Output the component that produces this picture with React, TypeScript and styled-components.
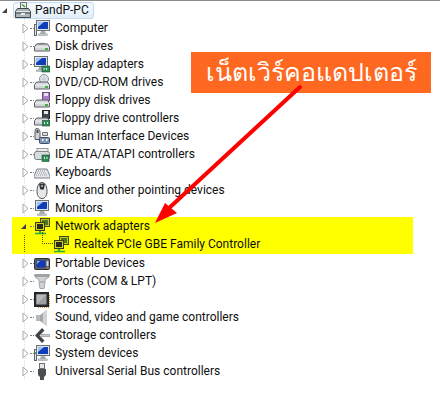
import React from "react";
import styled, { createGlobalStyle } from "styled-components";

const GlobalStyle = createGlobalStyle`
  html, body {
    margin: 0;
    padding: 0;
    background: #fff;
  }
`;

type IconKind =
  | "root" | "computer" | "disk" | "display" | "dvd" | "floppy" | "floppyCtl" | "hid" | "ide"
  | "keyboard" | "mouse" | "monitor" | "network" | "portable" | "ports" | "cpu" | "sound"
  | "storage" | "system" | "usb";

function DriveBase({ y = 9 }: { y?: number }) {
  return (
    <>
      <path d={`M0.5 ${y + 2}l2-3h11l2 3v4h-15z`} fill="#d2d6d7" stroke="#596165" />
      <path d={`M1 ${y + 2}h14`} stroke="#f4f5f5" />
      <rect x="11" y={y + 3} width="3" height="2" fill="#3fb03f" />
    </>
  );
}

function MiniMonitor({ x = 2 }: { x?: number }) {
  return (
    <g transform={`translate(${x} 0)`}>
      <rect x="0.5" y="0.5" width="13" height="10" fill="#dfe5e9" stroke="#6a7276" />
      <rect x="2" y="2" width="10" height="7" fill="#0f3fb8" />
      <path d="M2 2h6l-6 5z" fill="#9fc2f2" />
      <path d="M5 11h4l1 3H4z" fill="#a8aeb2" />
      <rect x="2.5" y="14" width="9" height="1.5" fill="#d4d8da" stroke="#858b8f" strokeWidth="0.5" />
    </g>
  );
}

function TreeIcon({ kind }: { kind: IconKind }) {
  return (
    <IconSvg viewBox="0 0 16 17">
      {kind === "root" && (
        <>
          <path d="M5.5 0.5h6v6h-6z" fill="#eef0ea" stroke="#6c7478" />
          <path d="M7 2.5l3 2.5" stroke="#3aa040" strokeWidth="1.6" />
          <path d="M0.5 9.5l2-3h11l2 3v6h-15z" fill="#aeb5b9" stroke="#3f464a" />
          <path d="M1 11h14" stroke="#3f464a" />
          <path d="M1 9.5h14" stroke="#e8eaeb" />
          <rect x="6" y="11" width="4" height="2" fill="#e8eaeb" />
        </>
      )}
      {kind === "computer" && (
        <>
          <rect x="0.5" y="4.5" width="2" height="11" fill="#e0e3e4" stroke="#5f6569" />
          <MiniMonitor />
        </>
      )}
      {kind === "disk" && (
        <>
          <path d="M1 9c1-5 13-5 14 0" fill="#e2e5e6" stroke="#8a9094" />
          <DriveBase y={7} />
        </>
      )}
      {kind === "display" && (
        <>
          <MiniMonitor x={0} />
          <rect x="8" y="10" width="8" height="6" fill="#2e8a56" stroke="#1a4f33" strokeWidth="0.6" />
          <path d="M9.5 12h1v2h-1zM12 12h1v2h-1z" fill="#d6f0d8" />
        </>
      )}
      {kind === "dvd" && (
        <>
          <circle cx="10" cy="5" r="4.5" fill="#dfe4ea" stroke="#8b9298" />
          <circle cx="10" cy="5" r="1.2" fill="#fff" stroke="#888" strokeWidth="0.5" />
          <DriveBase />
        </>
      )}
      {kind === "floppy" && (
        <>
          <rect x="8.5" y="0.5" width="7" height="8" fill="#a77cc9" stroke="#684a86" />
          <rect x="10" y="1" width="4" height="3" fill="#e9dff0" />
          <DriveBase />
        </>
      )}
      {kind === "floppyCtl" && (
        <>
          <rect x="8.5" y="0.5" width="7" height="8" fill="#40464c" stroke="#25292d" />
          <rect x="10" y="1" width="4" height="3" fill="#e4e6e8" />
          <DriveBase />
          <rect x="8.5" y="10.5" width="7.5" height="5.5" fill="#2e8a56" stroke="#1a4f33" strokeWidth="0.6" />
          <path d="M10 12h1v2h-1zM13 12h1v2h-1z" fill="#d6f0d8" />
        </>
      )}
      {kind === "hid" && (
        <>
          <path d="M2 0.5c3 0 4 1 4 4v7H1V3z" fill="#cfd3d6" stroke="#555b60" />
          <rect x="2.5" y="2" width="2" height="3" fill="#45494d" />
          <path d="M8.5 4.5h5v3h-5z" fill="#dde0e2" stroke="#6a7075" />
          <rect x="5.5" y="9.5" width="10" height="6" rx="1" fill="#7f97b4" stroke="#3f4f66" />
          <path d="M8 11h1.5v2H8zM12 11h1.5v2H12z" fill="#eef2f7" />
        </>
      )}
      {kind === "ide" && (
        <>
          <rect x="0.5" y="5.5" width="15" height="8" rx="2" fill="#d9dcdd" stroke="#777e82" />
          <rect x="3" y="2.5" width="11" height="3" fill="#eceeef" stroke="#6f7478" strokeWidth="0.7" />
          <rect x="8" y="9" width="7" height="6.5" fill="#2e8a56" stroke="#1a4f33" strokeWidth="0.6" />
          <path d="M10 11h1v2h-1zM12.5 11h1v2h-1z" fill="#d6f0d8" />
        </>
      )}
      {kind === "keyboard" && (
        <>
          <path d="M3 5h10l3 7v2H0v-2z" fill="#e4e6ea" stroke="#7b8188" />
          <path d="M4 7h8M3 9h10M2 11h12" stroke="#8e94a0" strokeDasharray="1 1" />
        </>
      )}
      {kind === "mouse" && (
        <>
          <path d="M8 0.5c4 0 5 5 5 9 0 4-2 7-5 7s-5-3-5-7c0-4 1-9 5-9z" fill="#e6e7e8" stroke="#4f5357" />
          <path d="M5 1.5h6l-1 5.5c-1 1-3 1-4 0z" fill="#34373a" />
          <circle cx="8" cy="4" r="1" fill="#b9bcbf" />
        </>
      )}
      {kind === "monitor" && <MiniMonitor x={1} />}
      {kind === "network" && (
        <>
          <rect x="6.5" y="0.5" width="9" height="8" fill="#c2cc1c" stroke="#4a4a20" />
          <rect x="8" y="2" width="6" height="5" fill="#4e7a1a" />
          <rect x="1.5" y="4.5" width="9" height="8" fill="#d0d41a" stroke="#3e3e1c" />
          <rect x="3" y="6" width="6" height="5" fill="#2b2f1a" />
          <path d="M6 13v2" stroke="#2fae3c" strokeWidth="2" />
          <path d="M1 15.5h11" stroke="#2fae3c" strokeWidth="1.6" />
        </>
      )}
      {kind === "portable" && (
        <>
          <rect x="0.5" y="3.5" width="15" height="11" rx="1" fill="#5a5f65" stroke="#2c2f33" />
          <rect x="2.5" y="5.5" width="9" height="7" fill="#1538b4" />
          <path d="M3 6h3l-3 3z" fill="#8fb0ee" />
          <path d="M12.5 6h2v5h-2z" fill="#d4d7da" />
          <rect x="13" y="12" width="1.5" height="1.5" fill="#d98f3a" />
        </>
      )}
      {kind === "ports" && (
        <>
          <path d="M0.5 1.5h15l-1 3-3.5 2v3l-1 6H6l-1-6v-3l-3.5-2z" fill="#cfd4d8" stroke="#9ea4a9" />
          <path d="M1 3h14" stroke="#7c8286" strokeWidth="1.2" />
          <path d="M6 9h4" stroke="#8f9599" />
        </>
      )}
      {kind === "cpu" && (
        <>
          <rect x="0.5" y="1.5" width="14" height="14" fill="#2a2d30" stroke="#1f2224" />
          <rect x="2.5" y="3.5" width="10" height="10" fill="#9ca1a4" />
          <path d="M2.5 3.5h10l-10 10z" fill="#b6babd" />
          <path d="M15.5 4v12M4 16.5h12" stroke="#d49a3a" strokeDasharray="1 1" />
        </>
      )}
      {kind === "sound" && (
        <>
          <rect x="2" y="6" width="5" height="6" fill="#b4babd" />
          <path d="M6 6l7-5v16l-7-5z" fill="#a2a9ad" />
          <path d="M9 4l4-3v16l-4-3z" fill="#d0d4d7" />
        </>
      )}
      {kind === "storage" && (
        <>
          <path d="M8 1L1 8.5 8 16l2.5-2.5-5-5 5-5z" fill="#3f4347" />
          <path d="M7 7.5h9v2H7z" fill="#c4c8cb" stroke="#777d82" strokeWidth="0.5" />
        </>
      )}
      {kind === "system" && (
        <>
          <rect x="0.5" y="4.5" width="2" height="11" fill="#e0e3e4" stroke="#5f6569" />
          <rect x="1" y="7" width="1" height="2" fill="#3fb03f" />
          <MiniMonitor />
        </>
      )}
      {kind === "usb" && (
        <>
          <rect x="5.5" y="0.5" width="5" height="5" fill="#e7e8e9" stroke="#6c7074" />
          <path d="M4 6h8v6l-2 2v3H6v-3l-2-2z" fill="#4a4f54" />
        </>
      )}
    </IconSvg>
  );
}

type Device = { label: string; icon: IconKind };

const beforeNetwork: Device[] = [
  { label: "Computer", icon: "computer" },
  { label: "Disk drives", icon: "disk" },
  { label: "Display adapters", icon: "display" },
  { label: "DVD/CD-ROM drives", icon: "dvd" },
  { label: "Floppy disk drives", icon: "floppy" },
  { label: "Floppy drive controllers", icon: "floppyCtl" },
  { label: "Human Interface Devices", icon: "hid" },
  { label: "IDE ATA/ATAPI controllers", icon: "ide" },
  { label: "Keyboards", icon: "keyboard" },
  { label: "Mice and other pointing devices", icon: "mouse" },
  { label: "Monitors", icon: "monitor" },
];

const afterNetwork: Device[] = [
  { label: "Portable Devices", icon: "portable" },
  { label: "Ports (COM & LPT)", icon: "ports" },
  { label: "Processors", icon: "cpu" },
  { label: "Sound, video and game controllers", icon: "sound" },
  { label: "Storage controllers", icon: "storage" },
  { label: "System devices", icon: "system" },
  { label: "Universal Serial Bus controllers", icon: "usb" },
];

function Row({ label, icon }: Device) {
  return (
    <TreeRow>
      <CollapsedArrow viewBox="0 0 7 11">
        <path d="M1 1l5 4.5L1 10z" fill="#fff" stroke="#a6a6a6" />
      </CollapsedArrow>
      <Dots />
      <TreeIcon kind={icon} />
      <Label>{label}</Label>
    </TreeRow>
  );
}

export default function App() {
  return (
    <Page>
      <GlobalStyle />
      <RootRow>
        <ExpandedArrow viewBox="0 0 7 7">
          <path d="M6 1v5H1z" fill="#404040" />
        </ExpandedArrow>
        <RootChip>
          <TreeIcon kind="root" />
          <RootLabel>PandP-PC</RootLabel>
        </RootChip>
      </RootRow>

      {beforeNetwork.map((d) => (
        <Row key={d.label} {...d} />
      ))}

      <Highlight>
        <GroupRow>
          <ExpandedArrow viewBox="0 0 7 7">
            <path d="M6 1v5H1z" fill="#404040" />
          </ExpandedArrow>
          <Dots />
          <TreeIcon kind="network" />
          <Label>Network adapters</Label>
        </GroupRow>
        <ChildRow>
          <Elbow />
          <TreeIcon kind="network" />
          <Label>Realtek PCIe GBE Family Controller</Label>
        </ChildRow>
      </Highlight>

      {afterNetwork.map((d) => (
        <Row key={d.label} {...d} />
      ))}

      <Callout>เน็ตเวิร์คอแดปเตอร์</Callout>
      <ArrowOverlay viewBox="0 0 440 417">
        <path d="M300 87L168 209" stroke="#fe0000" strokeWidth="4" strokeLinecap="round" />
        <path d="M155 223l10-20 12 10z" fill="#fe0000" />
      </ArrowOverlay>
    </Page>
  );
}

const Page = styled.div`
  position: relative;
  width: 440px;
  height: 417px;
  overflow: hidden;
  box-sizing: border-box;
  border-top: 1px solid #8c8c8c;
  background: #fff;
  color: #101010;
  font-family: Roboto, "Noto Sans", sans-serif;
  font-size: 12px;
`;

const TreeRow = styled.div`
  background-image: repeating-linear-gradient(#dcdcdc 0 1px, transparent 1px 2px);
  background-size: 1px 100%;
  background-repeat: no-repeat;
  background-position: 24px 0;
  display: flex;
  align-items: center;
  height: 18px;
  padding-left: 22px;
`;

const RootRow = styled.div`
  display: flex;
  align-items: center;
  height: 18px;
  padding-left: 1px;
`;

const RootChip = styled.div`
  display: flex;
  align-items: center;
  gap: 4px;
  width: 81px;
  height: 17px;
  margin: 1px 0 0 3px;
  padding-left: 1px;
  box-sizing: border-box;
  border: 1px solid #c4dcf2;
  border-radius: 3px;
  background: linear-gradient(#f6fafe, #e2eef9);
`;

const RootLabel = styled.span`
  line-height: 15px;
  white-space: nowrap;
`;

const CollapsedArrow = styled.svg`
  width: 7px;
  height: 11px;
  flex: none;
`;

const ExpandedArrow = styled.svg`
  width: 7px;
  height: 7px;
  margin-right: 2px;
  flex: none;
`;

const Dots = styled.span`
  width: 4px;
  margin-left: 1px;
  flex: none;
  border-top: 1px dotted #808080;
`;

const IconSvg = styled.svg`
  width: 16px;
  height: 17px;
  flex: none;
`;

const Label = styled.span`
  margin-left: 5px;
  white-space: nowrap;
  line-height: 18px;
`;

const Highlight = styled.div`
  width: 401px;
  height: 37px;
  margin-left: 12px;
  background: #ffff00;
`;

const GroupRow = styled.div`
  display: flex;
  align-items: center;
  height: 18px;
  padding-left: 8px;
`;

const ChildRow = styled.div`
  background-image: repeating-linear-gradient(#55551a 0 1px, transparent 1px 2px);
  background-size: 1px 100%;
  background-repeat: no-repeat;
  background-position: 12px 0;
  display: flex;
  align-items: center;
  height: 18px;
  padding-left: 30px;
`;

const Elbow = styled.span`
  width: 11px;
  height: 12px;
  margin-top: -12px;
  flex: none;
  box-sizing: border-box;
  border-left: 1px dotted #55551a;
  border-bottom: 1px dotted #55551a;
`;

const Callout = styled.div`
  position: absolute;
  left: 191px;
  top: 51px;
  width: 240px;
  height: 41px;
  box-sizing: border-box;
  padding-bottom: 2px;
  display: flex;
  align-items: center;
  justify-content: center;
  background: #ff6820;
  color: #fff;
  font-family: "Noto Sans", "DejaVu Sans", "Liberation Sans", sans-serif;
  font-size: 25px;
  white-space: nowrap;
`;

const ArrowOverlay = styled.svg`
  position: absolute;
  left: 0;
  top: -1px;
  width: 440px;
  height: 417px;
  pointer-events: none;
`;
